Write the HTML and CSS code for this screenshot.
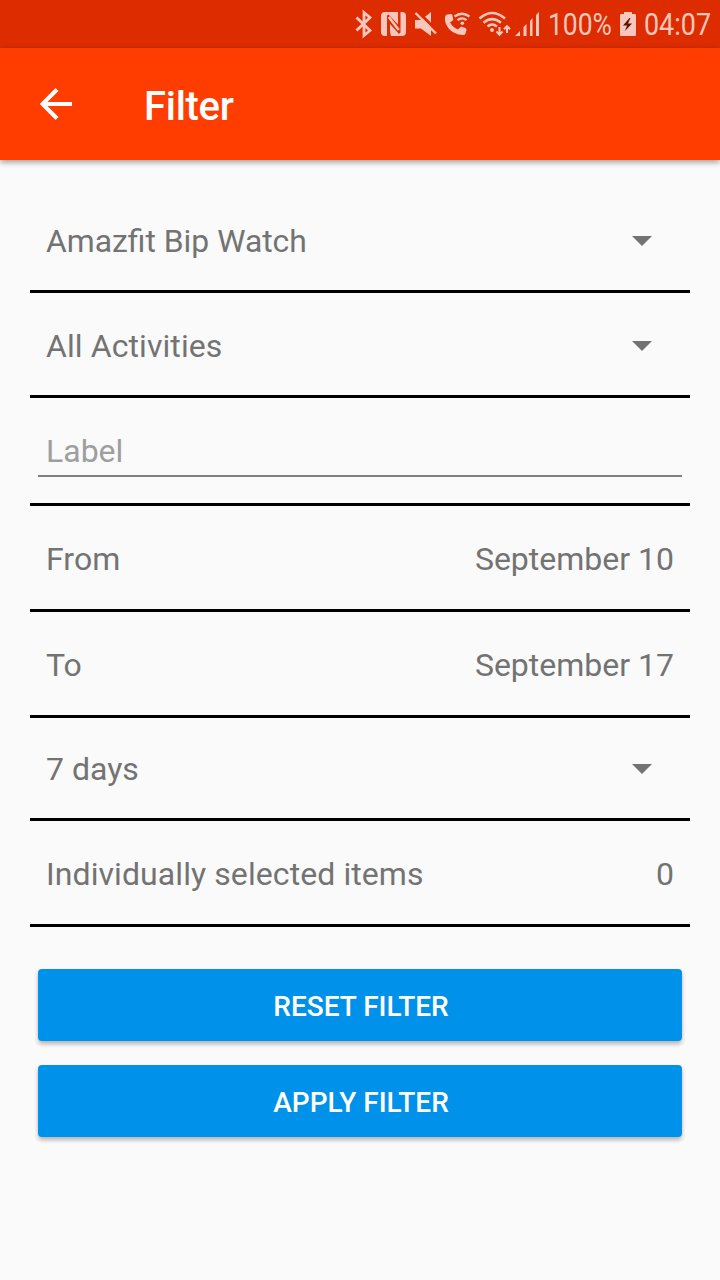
FILE: index.html
```
<!DOCTYPE html>
<html lang="en">
<head>
<meta charset="utf-8">
<title>Filter</title>
<link rel="stylesheet" href="styles.css">
</head>
<body>
<header class="status">
  <svg width="26" height="48" viewBox="352 0 26 48"><path class="line" d="M356.500 17.500 370 30.500 364 35.500V12.500L370 17.500 356.500 30.500" stroke-width="2.800"/></svg>
  <svg width="32" height="48" viewBox="378 0 32 48"><rect x="381" y="12" width="25" height="24" rx="4" fill="#f7c6bc"/><path d="M391 36H387V15.500L388.500 14.500 398 24.500V12H400.500V32.500L399 34 390 24V32Z" fill="#dd2c00"/><path class="line" d="M388.800 17 398.800 30" stroke-width="2.600"/></svg>
  <svg width="32" height="48" viewBox="410 0 32 48"><path class="solid" d="M415 20H421L431 12V36L421 28.500H415Z"/><path d="M417.500 11 438 32" stroke="#dd2c00" stroke-width="3"/><path class="line" d="M415.500 13 436 33.500" stroke-width="2.400"/></svg>
  <svg width="34" height="48" viewBox="442 0 34 48"><path class="solid" d="M447 14.500 451 14Q452 14 452.300 15L453.200 19Q453.300 20 452.500 20.700L450 22.500Q453 27.500 458 29.500L460.500 27Q461.200 26.500 462 26.800L465.800 28.300Q466.700 28.800 466.500 30L465.500 33.500Q465 35 463 35C452 34.500 444 26 445 17Q445.200 15 447 14.500Z"/><path class="line" d="M454.500 16.500Q462 11 469.500 16.500M457.500 20.200Q462 16.500 466.500 20.200" stroke-width="2.300"/><circle class="solid" cx="462.300" cy="23.300" r="1.800"/></svg>
  <svg width="37" height="48" viewBox="476 0 37 48"><path class="line" d="M479.500 18.500Q492 7.500 505 18.500M483.500 22.700Q492 15.500 501 22.700M487.500 26.500Q492 22.500 497 26.500" stroke-width="2.500"/><circle class="solid" cx="492" cy="30" r="2"/><path class="line" d="M499.500 27V34M496.500 31.500 499.500 34.700 502.500 31.500M507 33V26.500M504 29.300 507 26.200 510 29.300" stroke-width="2"/></svg>
  <svg width="33" height="48" viewBox="513 0 33 48"><path class="solid" d="M515 36 520 31V36ZM523.500 36V27L526.500 24V36ZM530 36V21L532.500 18V36ZM536 36V15L539 12V36Z"/></svg>
  <svg width="70" height="48" viewBox="546 0 70 48"><text x="548" y="35" textLength="64" lengthAdjust="spacingAndGlyphs">100%</text></svg>
  <svg width="25" height="48" viewBox="616 0 25 48"><path class="solid" d="M620 15Q620 14 621 14H624V12H632V14H635Q636 14 636 15V35Q636 36 635 36H621Q620 36 620 35Z"/><path d="M629.500 18 623 25.500H627L625 31 632 23.500H628L630.500 18Z" fill="#5a1503"/></svg>
  <svg width="79" height="48" viewBox="641 0 79 48"><text x="644" y="35" textLength="67" lengthAdjust="spacingAndGlyphs">04:07</text></svg>
</header>
<nav class="appbar">
  <svg width="32" height="32" viewBox="0 0 32 32"><path d="M17 1.500 2.500 16 17 30.500M2.500 16H32" fill="none" stroke="#fff" stroke-width="4"/></svg>
  <h1>Filter</h1>
</nav>
<main class="filters">
  <div class="row"><span class="snug">Amazfit Bip Watch</span><i class="caret"></i></div>
  <div class="row"><span class="loose">All Activities</span><i class="caret"></i></div>
  <div class="row row-input"><div class="field">Label</div></div>
  <div class="row row-tall"><span class="loose">From</span><span>September 10</span></div>
  <div class="row row-tall"><span>To</span><span>September 17</span></div>
  <div class="row row-short"><span>7 days</span><i class="caret"></i></div>
  <div class="row row-tall"><span class="loose">Individually selected items</span><span>0</span></div>
  <div class="actions">
    <button class="btn">RESET FILTER</button>
    <button class="btn">APPLY FILTER</button>
  </div>
</main>
</body>
</html>
```
FILE: styles.css
```
* { box-sizing: border-box; }
body {
  margin: 0;
  min-height: 1280px;
  background: #fafafa;
  color: #737373;
  font: 32px/38px Roboto, sans-serif;
}
svg { display: block; flex: none; overflow: visible; }
.status {
  display: flex;
  justify-content: flex-end;
  height: 48px;
  background: #dd2c00;
}
.status text { font-size: 31px; fill: #f7c6bc; }
.solid { fill: #f7c6bc; }
.line { fill: none; stroke: #f7c6bc; }
.appbar {
  display: flex;
  align-items: center;
  height: 112px;
  padding-left: 40px;
  background: #ff3d00;
  box-shadow: 0 2px 6px rgba(0, 0, 0, .4);
}
.appbar h1 {
  margin: 6px 0 0 72px;
  color: #fff;
  font-size: 40px;
  font-weight: 500;
  line-height: 48px;
  letter-spacing: -.3px;
}
.filters { padding: 28px 30px 0; }
.row {
  display: flex;
  justify-content: space-between;
  height: 105px;
  padding: 34px 16px 0;
  border-bottom: 3px solid #000;
}
.row-tall { height: 106px; }
.row-short { height: 103px; padding-top: 32px; }
.row-input { height: 108px; padding: 34px 8px 0; }
.snug { font-size: 31.85px; }
.loose { letter-spacing: .08px; }
.field {
  flex: 1;
  height: 45px;
  padding-left: 8px;
  border-bottom: 2px solid #808080;
  color: #9e9e9e;
}
.caret {
  width: 20px;
  height: 10px;
  margin: 14px 22px 0 0;
  background: #737373;
  clip-path: polygon(0 0, 100% 0, 50% 100%);
}
.actions {
  display: grid;
  gap: 24px;
  padding: 42px 8px 0;
}
.btn {
  height: 72px;
  padding: 4px 0 0 2px;
  border: 0;
  border-radius: 4px;
  background: #0091ea;
  box-shadow: 0 3px 4px rgba(0, 0, 0, .28);
  color: #fff;
  font: 500 28px/34px Roboto, sans-serif;
}
```
